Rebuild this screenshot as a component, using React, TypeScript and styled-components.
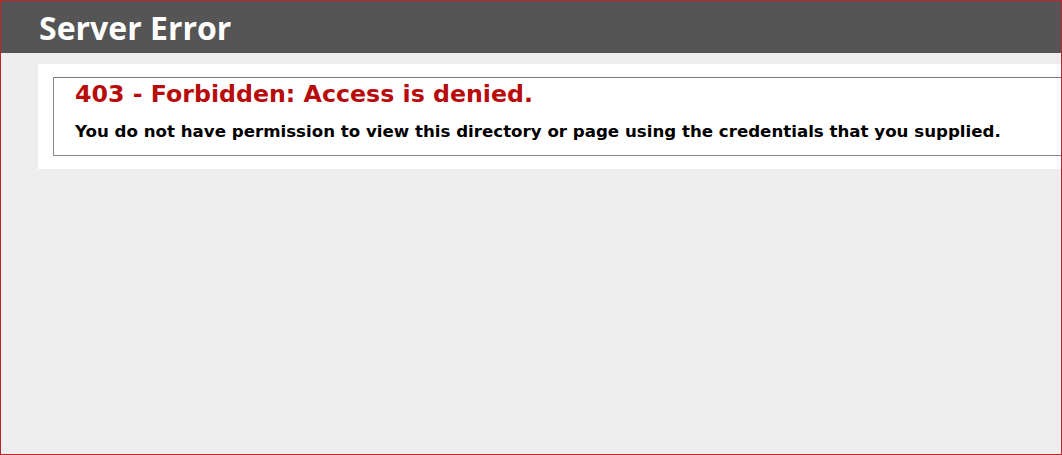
import React from "react";
import styled, { createGlobalStyle } from "styled-components";

const Global = createGlobalStyle`
  html, body { margin: 0; padding: 0; }
  body {
    background: #eeeeee;
    font-family: "DejaVu Sans", Verdana, sans-serif;
    font-size: 11.2px;
  }
`;

const Frame = styled.div`
  box-sizing: border-box;
  width: 1062px;
  height: 455px;
  border: 1px solid #b8262b;
  background: #eeeeee;
  overflow: hidden;
`;

const Header = styled.div`
  box-sizing: border-box;
  height: 52px;
  background: #555555;
  padding: 1px 0 0 38px;
  display: flex;
  align-items: center;
`;

const Title = styled.h1`
  margin: 0;
  color: #ffffff;
  font-family: "Open Sans", "Trebuchet MS", sans-serif;
  font-weight: 700;
  font-size: 32px;
  line-height: 1;
`;

const Content = styled.div`
  margin: 11px 0 0 37px;
`;

const Container = styled.div`
  width: 1100px;
  background: #ffffff;
  padding: 13px 15px 13px 15px;
`;

const Fieldset = styled.fieldset`
  margin: 0;
  border: 1px solid #8a8a8a;
  border-top-color: #7a7a7a;
  padding: 2px 15px 13px 21px;
`;

const Heading = styled.h2`
  margin: 0;
  color: #b80b0b;
  font-family: "DejaVu Sans", Verdana, sans-serif;
  font-weight: 700;
  font-size: 23.7px;
  line-height: 28px;
`;

const Message = styled.h3`
  margin: 14px 0 0 0;
  color: #000000;
  font-family: "DejaVu Sans", Verdana, sans-serif;
  font-weight: 700;
  font-size: 16.65px;
  line-height: 20px;
`;

export default function App() {
  return (
    <>
      <Global />
      <Frame>
        <Header>
          <Title>Server Error</Title>
        </Header>
        <Content>
          <Container>
            <Fieldset>
              <Heading>403 - Forbidden: Access is denied.</Heading>
              <Message>
                You do not have permission to view this directory or page using the credentials that you supplied.
              </Message>
            </Fieldset>
          </Container>
        </Content>
      </Frame>
    </>
  );
}
